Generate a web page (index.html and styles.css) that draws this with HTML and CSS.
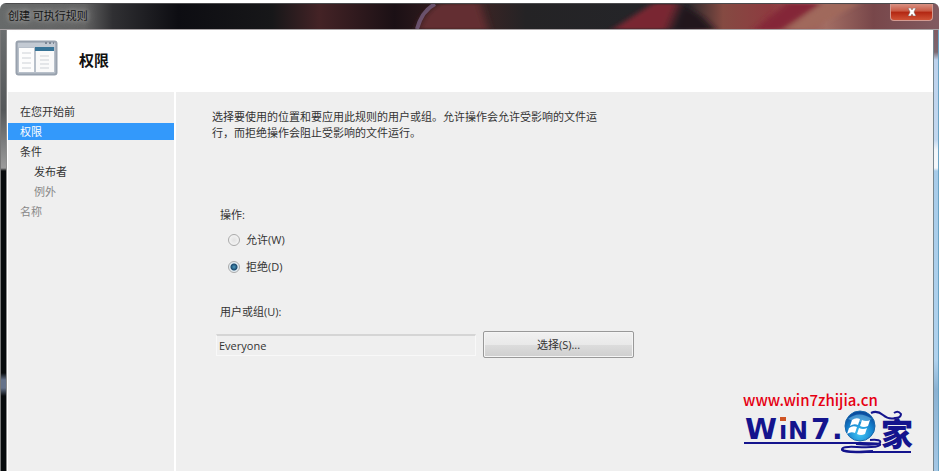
FILE: index.html
```
<!DOCTYPE html>
<html lang="zh-CN">
<head>
    <meta charset="UTF-8">
    <meta name="viewport" content="width=device-width, initial-scale=1.0">
    <title>创建 可执行规则</title>
    <link rel="stylesheet" href="styles.css">
</head>
<body>
    <div class="window">
        <div class="titlebar">
            <svg class="glass" viewBox="0 0 939 27" preserveAspectRatio="none" aria-hidden="true">
                <defs>
                    <linearGradient id="glass-base" x1="0" x2="1" y1="0" y2="0">
                        <stop offset="0" stop-color="#676a6a"/>
                        <stop offset=".09" stop-color="#626262"/>
                        <stop offset=".12" stop-color="#303033"/>
                        <stop offset=".19" stop-color="#0d0d12"/>
                        <stop offset=".29" stop-color="#171719"/>
                        <stop offset=".34" stop-color="#442326"/>
                        <stop offset=".42" stop-color="#1b1015"/>
                        <stop offset=".5" stop-color="#402424"/>
                        <stop offset=".56" stop-color="#242325"/>
                        <stop offset=".73" stop-color="#25262a"/>
                        <stop offset=".77" stop-color="#854a42"/>
                        <stop offset=".82" stop-color="#8e3b40"/>
                        <stop offset=".88" stop-color="#a26d63"/>
                        <stop offset=".93" stop-color="#78474a"/>
                        <stop offset="1" stop-color="#815a60"/>
                    </linearGradient>
                    <filter id="soft"><feGaussianBlur stdDeviation="4 1"/></filter>
                </defs>
                <rect width="939" height="27" fill="url(#glass-base)"/>
                <g filter="url(#soft)">
                    <path d="M418 27 Q424 7 440 0 H480 L488 27Z" fill="#642f30"/>
                    <path d="M613 27 L652 0 H678 L668 27Z" fill="#792832"/>
                    <path d="M672 27 L682 0 L702 14 L714 27Z" fill="#20191f"/>
                    <path d="M755 27 L785 0 H820 L782 27Z" fill="#842838"/>
                    <path d="M786 27 L824 0 H858 L812 27Z" fill="#a0695c"/>
                </g>
                <path d="M417 27 Q422 7 435 0" fill="none" stroke="#7d678c" stroke-width="4" opacity=".7"/>
            </svg>
            <span class="title">创建 可执行规则</span>
            <button class="close" type="button" aria-label="关闭">
                <svg width="10" height="8" viewBox="0 0 10 8" aria-hidden="true">
                    <path d="M1 0H4L5 2L6 0H9L7 4L9 8H6L5 6L4 8H1L3 4Z" fill="#fff" stroke="#71504e" stroke-width=".5"/>
                </svg>
            </button>
        </div>

        <div class="frame">
            <div class="client">
                <header class="header">
                    <svg class="header-icon" width="44" height="36" viewBox="0 0 44 36" aria-hidden="true">
                        <rect x="1.5" y="1.5" width="40" height="33" rx="2" fill="#b8c0ca" stroke="#98a1ad" stroke-width="2"/>
                        <path d="M3 3H40V7H3Z" fill="#c3cad3"/>
                        <path d="M30 3H32M34 3H36M38 3H39" stroke="#7c8795" stroke-width="2"/>
                        <rect x="4" y="8" width="15" height="24" fill="#fdfdfd"/>
                        <rect x="21" y="8" width="18" height="24" fill="#fafafa"/>
                        <rect x="20" y="7" width="19" height="4" fill="#377497"/>
                        <path d="M7 13H16M7 18H16M7 23H16M7 28H16M25 16H34M25 20H34M25 24H34M25 28H34" stroke="#cdd1d6"/>
                    </svg>
                    <h1>权限</h1>
                </header>

                <div class="body">
                    <nav class="steps">
                        <a href="#">在您开始前</a>
                        <a href="#" class="active">权限</a>
                        <a href="#">条件</a>
                        <a href="#" class="sub">发布者</a>
                        <a href="#" class="sub disabled">例外</a>
                        <a href="#" class="disabled">名称</a>
                    </nav>

                    <main class="page">
                        <p class="intro">选择要使用的位置和要应用此规则的用户或组。允许操作会允许受影响的文件运行，而拒绝操作会阻止受影响的文件运行。</p>

                        <form class="form">
                            <fieldset class="action">
                                <legend>操作:</legend>
                                <label><input type="radio" name="action" value="allow">允许(W)</label>
                                <label><input type="radio" name="action" value="deny" checked>拒绝(D)</label>
                            </fieldset>

                            <label class="user-label" for="user">用户或组(U):</label>
                            <div class="user-row">
                                <input id="user" type="text" value="Everyone" readonly>
                                <button type="button">选择(S)...</button>
                            </div>
                        </form>
                    </main>
                </div>
            </div>
        </div>
    </div>

    <div class="watermark">
        <a href="#">www.win7zhijia.cn</a>
        <svg width="174" height="44" viewBox="0 0 174 44" role="img" aria-label="Win7之家">
            <defs>
                <radialGradient id="orb" cx=".5" cy=".75" r=".7">
                    <stop offset="0" stop-color="#43c8f5"/>
                    <stop offset=".6" stop-color="#1684d0"/>
                    <stop offset="1" stop-color="#0a4a9c"/>
                </radialGradient>
            </defs>
            <g class="logo-text">
                <text x="2" y="29" font-size="29">W</text>
                <text x="36" y="29" font-size="24">ı</text>
                <text x="45" y="29" font-size="24">N</text>
                <text x="68" y="29" font-size="28">7</text>
                <text x="89" y="29" font-size="28">.</text>
            </g>
            <rect x="37" y="7" width="6" height="4" fill="#cf5424"/>
            <path d="M1 33H119Q139 33 137 35Q134 38 114 37Q98 36 99 40Q101 43 123 42H168" fill="none" stroke="#14148d" stroke-width="2"/>
            <path d="M113 34Q132 36 137 33Q139 29 127 30M99 39Q101 43 130 41" fill="none" stroke="#14148d" stroke-width="2"/>
            <path d="M128 3Q134 0 140 5T152 8Q158 8 158 4Q155 0 151 3" fill="none" stroke="#14148d" stroke-width="2"/>
            <circle cx="117" cy="16" r="15" fill="url(#orb)" stroke="#1767aa"/>
            <path d="M105 9Q116 0 129 9Q117 15 105 9Z" fill="#8bd4f5" opacity=".45"/>
            <path d="M109 10Q113 7 117 9L115 15Q111 13 107 16ZM119 10Q123 12 127 10L125 16Q121 18 117 16ZM106 18Q110 15 114 17L112 23Q108 21 104 24ZM116 18Q120 20 124 18L122 24Q118 26 114 24Z" fill="#fff"/>
            <text class="logo-home" x="138" y="36" font-size="32">家</text>
        </svg>
    </div>
</body>
</html>
```
FILE: styles.css
```
* {
    box-sizing: border-box;
}

body {
    margin: 0;
    min-height: 100vh;
    padding-top: 3px;
    background: #fff;
    color: #333;
    font-family: "Open Sans", "Noto Sans CJK SC", sans-serif;
    font-size: 11px;
    line-height: 16px;
}

a {
    color: inherit;
    text-decoration: none;
}

button,
input {
    font: inherit;
    color: inherit;
}

.window {
    display: flex;
    flex-direction: column;
    min-height: calc(100vh - 3px);
    border-radius: 6px 6px 0 0;
    overflow: hidden;
}

/* Title bar */
.titlebar {
    position: relative;
    display: flex;
    justify-content: space-between;
    align-items: flex-start;
    height: 27px;
    padding: 0 6px 0 8px;
    border-top: 1px solid #4b4b4d;
    border-bottom: 1px solid #aaa5a7;
}

.glass {
    position: absolute;
    inset: 0;
    width: 100%;
    height: 100%;
}

.title {
    position: relative;
    margin-top: 4px;
    color: #151515;
    text-shadow: 0 0 4px #aaa, 0 0 8px #999, 0 0 12px #888;
}

.close {
    position: relative;
    display: flex;
    justify-content: center;
    align-items: center;
    width: 43px;
    height: 17px;
    padding: 0;
    border: 1px solid #d39a91;
    border-top: 0;
    border-radius: 0 0 4px 4px;
    background: linear-gradient(#d99183, #c85842 45%, #b22611 50%, #cf5235);
}

/* Glass borders at both sides of the client area */
.frame {
    flex: 1;
    display: grid;
    grid-template-columns: 7px 1fr 6px;
}

.frame::before {
    content: "";
    border-left: 1px solid #777;
    border-right: 1px solid #8c8c8c;
    background: linear-gradient(#6b6e6f, #55585a 80px, #9b9b9b 138px, #080b0d 141px, #080b0d 343px, #65728a 350px, #65728a 358px, #080b0d 366px);
}

.frame::after {
    content: "";
    border-left: 1px solid #76868f;
    border-right: 1px solid #6aa3c4;
    background: linear-gradient(#815b62, #7b6870 22px, #bdd2ec 30px, #c3d8ef 110px, #f1f5f9 120px, #f4f7fa 138px, #a8cce9 141px, #b0d2ed 330px, #8bb2d2 360px, #a5c8e5);
}

.client {
    display: flex;
    flex-direction: column;
    border-left: 1px solid #fff;
    background: #efefef;
}

.header {
    display: flex;
    align-items: center;
    gap: 20px;
    height: 62px;
    padding: 0 7px 6px;
    background: #fff;
}

.header h1 {
    margin: 4px 0 0;
    color: #111;
    font-size: 15px;
    line-height: 20px;
}

.body {
    flex: 1;
    display: grid;
    grid-template-columns: 168px 1fr;
}

/* Wizard steps */
.steps {
    display: flex;
    flex-direction: column;
    gap: 3px;
    padding-top: 11px;
    border-right: 2px solid #fff;
}

.steps a {
    padding-left: 12px;
    line-height: 17px;
}

.steps .active {
    background: #3399fb;
    color: #fff;
}

.steps .sub {
    padding-left: 26px;
}

.steps .disabled {
    color: #888;
}

/* Page */
.page {
    padding: 17px 36px;
}

.intro {
    max-width: 396px;
    margin: 0 0 66px;
}

.form {
    padding-left: 4px;
}

.action {
    display: grid;
    gap: 11px;
    margin: 0 0 29px;
    padding: 0;
    border: 0;
}

.action legend {
    margin-bottom: 9px;
    padding: 0 4px;
}

.action label {
    display: flex;
    align-items: center;
    gap: 6px;
    padding-left: 12px;
}

.action input {
    appearance: none;
    width: 12px;
    height: 12px;
    margin: 0;
    border: 1px solid #aaa;
    border-radius: 50%;
    background: radial-gradient(#e2e2e2, #fafafa);
}

.action input:checked {
    background: radial-gradient(circle, #4d9cc0 0, #1c4b70 3px, #e3edf3 4px);
}

.user-label {
    display: block;
    margin-bottom: 11px;
    padding-left: 4px;
}

.user-row {
    display: flex;
    align-items: center;
    gap: 7px;
}

.user-row input {
    width: 260px;
    height: 22px;
    padding: 0 2px;
    border: 1px solid #f8f8f8;
    border-top: 2px solid #d5d5d5;
    background: transparent;
}

.user-row button {
    width: 151px;
    height: 27px;
    padding: 0;
    border: 1px solid #999;
    border-radius: 2px;
    background: linear-gradient(#f1f1f1, #e9e9e9 50%, #dcdcdc 52%, #cfcfcf);
    box-shadow: inset 0 0 0 1px #f5f5f5;
}

/* Site mark over the lower right corner */
.watermark {
    position: absolute;
    right: 22px;
    bottom: 17px;
    width: 174px;
}

.watermark a {
    display: block;
    color: #e60012;
    font-family: "Noto Sans CJK SC", sans-serif;
    font-size: 15px;
    font-weight: 500;
    line-height: 20px;
}

.watermark svg {
    display: block;
    overflow: visible;
}

.logo-text {
    fill: #14148d;
    font-family: "DejaVu Sans", sans-serif;
    font-weight: bold;
}

.logo-home {
    fill: #14148d;
    font-family: "Noto Sans CJK SC", sans-serif;
    font-weight: 900;
}
```
